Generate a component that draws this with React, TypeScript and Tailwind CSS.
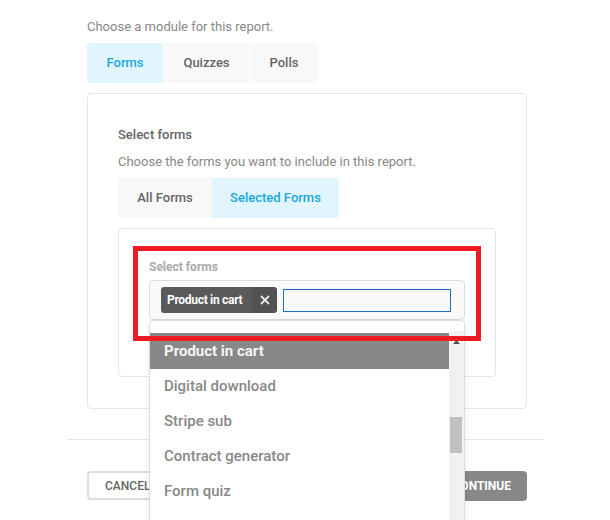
import React from "react";

export default function App() {
  const items = ["Digital download", "Stripe sub", "Contract generator", "Form quiz"];
  return (
    <div
      className="relative w-[610px] h-[520px] overflow-hidden bg-white"
      style={{ fontFamily: "Roboto, 'Liberation Sans', sans-serif" }}
    >
      <div className="mx-[67px] w-[476px]">
        <div className="pl-[20px] pr-[16px] pt-[18px]">
          <p className="text-[13px] leading-[18px] text-[#888]">Choose a module for this report.</p>
          <div className="mt-[7px] flex w-fit gap-px overflow-hidden rounded-[4px]">
            <div className="flex h-[40px] w-[76px] items-center justify-center bg-[#e1f5fe] text-[13px] font-medium text-[#17a8e3]">Forms</div>
            <div className="flex h-[40px] w-[85px] items-center justify-center bg-[#f8f8f8] text-[13px] font-medium text-[#666]">Quizzes</div>
            <div className="flex h-[40px] w-[68px] items-center justify-center bg-[#f8f8f8] text-[13px] font-medium text-[#666]">Polls</div>
          </div>
          <div className="mt-[10px] h-[316px] rounded-[4px] border border-[#e6e6e6] px-[30px] pt-[31px]">
            <p className="text-[13px] leading-[20px] font-medium text-[#666]">Select forms</p>
            <p className="mt-[7px] text-[13px] leading-[20px] text-[#888]">Choose the forms you want to include in this report.</p>
            <div className="mt-[6px] flex w-fit overflow-hidden rounded-[4px]">
              <div className="flex h-[40px] w-[94px] items-center justify-center bg-[#f8f8f8] text-[13px] font-medium text-[#666]">All Forms</div>
              <div className="flex h-[40px] w-[127px] items-center justify-center bg-[#e1f5fe] text-[13px] font-medium text-[#17a8e3]">Selected Forms</div>
            </div>
            <div className="mt-[10px] h-[149px] rounded-[4px] border border-[#e6e6e6] px-[30px] pt-[31px]">
              <p className="text-[12px] leading-[14px] font-bold text-[#aaa]">Select forms</p>
              <div className="mt-[6px] flex h-[40px] items-center gap-[6px] rounded-[4px] border border-[#ddd] bg-[#fafafa] pl-[11px]">
                <div className="flex h-[26px] overflow-hidden rounded-[3px]">
                  <span className="flex items-center bg-[#5a5a5a] pl-[6px] pr-[10px] text-[12px] font-bold tracking-[-0.3px] text-white">Product in cart</span>
                  <span className="flex w-[25px] items-center justify-center bg-[#525252] text-white">
                    <svg width="10" height="10" viewBox="0 0 10 10">
                      <path d="M1 1 L9 9 M9 1 L1 9" stroke="#e8e8e8" strokeWidth="1.8" />
                    </svg>
                  </span>
                </div>
                <div className="h-[23px] w-[168px] border border-[#1f6fbf] bg-[#fafafa]" />
              </div>
            </div>
          </div>
        </div>
        <div className="mt-[30px] border-t border-[#e6e6e6]" />
        <div className="mt-[31px] flex justify-between pl-[20px] pr-[16px]">
          <button className="h-[29px] w-[90px] rounded-[4px] border-2 border-[#ddd] bg-white pl-[16px] text-left text-[12px] font-medium text-[#666]">CANCEL</button>
          <button className="h-[30px] w-[98px] rounded-[4px] bg-[#888] pr-[16px] text-right text-[12px] font-bold text-white">CONTINUE</button>
        </div>
      </div>

      {/* dropdown */}
      <div className="absolute left-[149px] top-[320px] h-[240px] w-[316px] overflow-hidden rounded-t-[4px] border border-[#ddd] bg-white shadow-[0_2px_6px_rgba(0,0,0,0.08)]">
        <div className="flex h-full">
          <div className="flex-1 pt-[12px]">
            <div className="flex h-[36px] items-center bg-[#888] pl-[14px] text-[15px] font-bold text-[#f5f5f5]">Product in cart</div>
            {items.map((t) => (
              <div key={t} className="flex h-[35px] items-center pl-[14px] text-[15px] font-medium text-[#888]">{t}</div>
            ))}
          </div>
          <div className="relative mt-[10px] w-[15px] bg-[#f1f1f1]">
            <svg className="absolute left-[4px] top-[9px]" width="7" height="4" viewBox="0 0 7 4">
              <path d="M3.5 0 L7 4 L0 4 Z" fill="#505050" />
            </svg>
            <div className="absolute left-[1px] top-[86px] h-[36px] w-[12px] bg-[#c1c1c1]" />
          </div>
        </div>
      </div>

      {/* highlight */}
      <div className="absolute left-[133px] top-[246px] h-[95px] w-[348px] border-[5px] border-[#ed1c24]" />
    </div>
  );
}
